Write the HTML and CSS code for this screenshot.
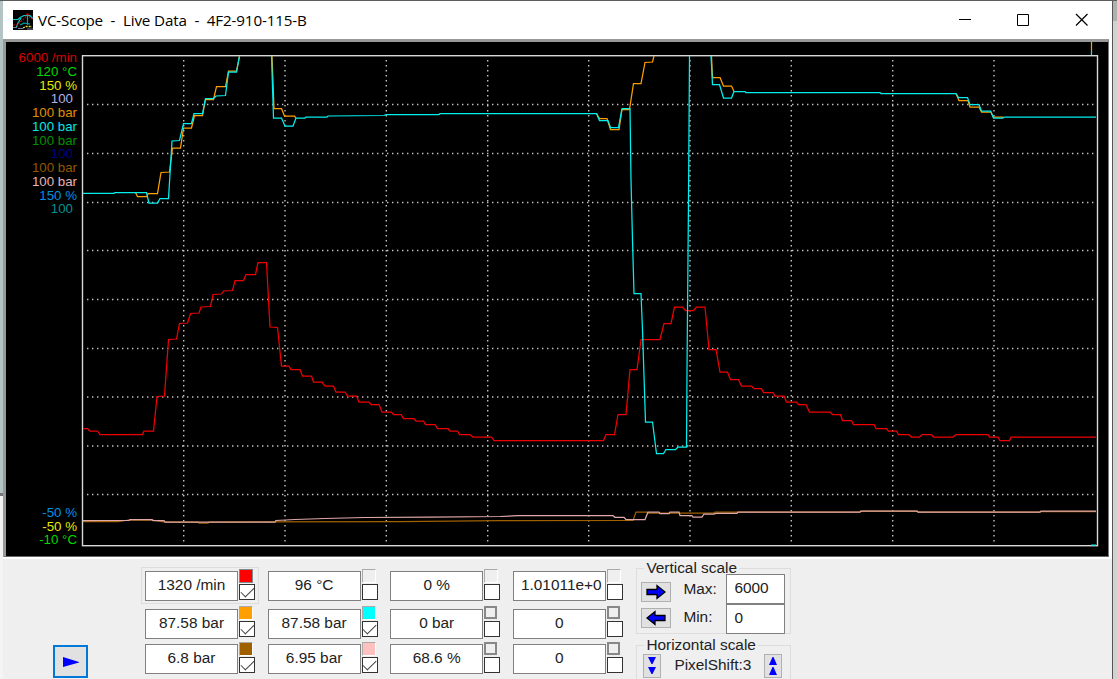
FILE: index.html
```html
<!DOCTYPE html>
<html lang="en">
<head>
    <meta charset="UTF-8">
    <meta name="viewport" content="width=device-width, initial-scale=1.0">
    <title>VC-Scope</title>
    <link rel="stylesheet" href="styles.css">
</head>
<body>
    <div class="desktop-left"></div>

    <div class="window">
        <header>
            <svg class="app-icon" width="20" height="20" viewBox="0 0 20 20">
                <rect width="20" height="20" fill="#000"/>
                <path d="M0 9.500h5l2-2 4-2h6l3 3M3 18l2-5 3-5" fill="none" stroke="#0cc" stroke-width="1.200"/>
                <path d="M0 15h5l2-3 5-4 2.500-5 2.500 5 3 1" fill="none" stroke="#d00000" stroke-width="1.100" stroke-dasharray="2 1"/>
                <path d="M14.500 6v9M7 15l4-2 6 1" fill="none" stroke="#0aa" stroke-width="1.200"/>
                <path d="M10 18l3-1.500h6" fill="none" stroke="#dd4" stroke-width="1.300" stroke-dasharray="2 1"/>
                <path d="M0 17.500h4M5 18.500h5M14 19h6" stroke="#779" stroke-width="1.200"/>
            </svg>
            <h1>VC-Scope&nbsp; -&nbsp; Live Data&nbsp; -&nbsp; 4F2-910-115-B</h1>
            <nav>
                <svg width="58" height="38" viewBox="0 0 58 38"><path d="M23 18.5h12" stroke="#000"/></svg>
                <svg width="58" height="38" viewBox="0 0 58 38"><path d="M23.5 13.5h11v11h-11z" fill="none" stroke="#000"/></svg>
                <svg width="58" height="38" viewBox="0 0 58 38"><path d="M24 13l11.500 11.500M35.500 13L24 24.500" stroke="#000" stroke-width="1.200"/></svg>
            </nav>
        </header>

        <main>
            <div class="scale">
                <ul class="scale-max">
                    <li class="red">6000 /min</li>
                    <li class="green">120 °C</li>
                    <li class="yellow">150 %</li>
                    <li class="lavender no-unit">100</li>
                    <li class="orange">100 bar</li>
                    <li class="cyan">100 bar</li>
                    <li class="dark-green">100 bar</li>
                    <li class="navy no-unit">100</li>
                    <li class="brown">100 bar</li>
                    <li class="pink">100 bar</li>
                    <li class="blue">150 %</li>
                    <li class="teal no-unit">100</li>
                </ul>
                <ul class="scale-min">
                    <li class="blue">-50 %</li>
                    <li class="yellow">-50 %</li>
                    <li class="green">-10 °C</li>
                </ul>
            </div>
            <svg class="plot" width="1030" height="514" viewBox="78 42 1030 514">
                <!-- grid -->
                <g class="grid">
                    <path d="M87 104.500H1094M87 153.500H1094M87 202.500H1094M87 250.500H1094M87 299.500H1094M87 348.500H1094M87 397H1094M87 446H1094M87 494.500H1094"/>
                    <path d="M183.700 60V543M285 60V543M386.300 60V543M487.700 60V543M588.700 60V543M690 60V543M791.300 60V543M892.700 60V543M994 60V543"/>
                </g>
                <rect class="frame" x="82.500" y="55.700" width="1015" height="490"/>
                <!-- channels -->
                <polyline class="trace brown" points="83,521.5 118,521.7 129,520 152,520 165,522 198,522 199,523 208,523 209,522 400,521.5 500,520.7 633,520.5 636,512 647,512 648,513 714,513 715,512 860,512 861,511 917,511 918,512 1040,512 1041,511.500 1096,511.500"/>
                <polyline class="trace pink" points="83,520.7 129,520.5 130,519.5 152,519.5 153,520.5 164,520.5 165,522 275,522 276,520.5 295,519.500 325,518.500 365,517.500 430,517 500,516.500 518,515.7 613,515.7 615,517.3 624,517.3 626,519.5 645,519.5 648,512 659,512 660,513.5 669,513.5 670,512 679,512 680,515.5 692,515.5 693,517 702,517 704,514 714,514 716,513.3 737,513.3 738,512 860,512 861,511 917,511 918,512 1040,512 1041,511 1096,511"/>
                <polyline class="trace red" points="83,428.5 87.5,428.5 90,431 97.5,431 100,434.5 142.5,434.5 144,431 153.5,431 157,396.5 164.5,396 168.5,339.5 176.5,339 179.5,323.5 187.5,323 190.5,313.5 199,313 201,307 210.5,306.5 213,294.5 221.5,294 223.5,291 232.5,290.5 235,280.5 243.5,280.5 246,274.5 255.5,274.5 258,262.5 266.5,262.5 270,327 277.5,327.5 281.5,366 289,366 291,369.5 300,369.5 302.5,376 311.5,376 313.5,382 322,382 325,386 333.5,386 336,392 345,392 347.5,396 356.5,396 359,402 369,402 371,404.5 379,404.5 382,412 391.5,412 393.5,414.5 401,414.5 403.5,418.5 414,418.5 416,421 423.5,421 425.5,424.5 435,424.5 437.5,428.5 448,428.5 450,431 457.5,431 459.5,434.5 470,434.5 473,437 491.5,437 494,440.5 603.5,440.5 606,434.5 614.5,434.5 618,414.5 626,414.5 630,369.5 637,369.5 641,339.5 660,339.5 664,323.5 671,323.5 674.5,307 682.5,307 685.5,310.5 693.5,310.5 696.5,307 705,307 709,349.5 716,349.5 720,372 727.5,372 730.5,379.5 738.5,379.5 741.5,386 751.5,386 754,388.5 761.5,388.5 763.5,392.5 773,392.5 775,396 784,396 786.5,402 796.5,402 798.5,404.5 806,404.5 809.5,412 830,412 832.5,414.5 840.5,414.5 842.5,420.5 851.5,420.5 853.5,424.5 874,424.5 876,428.5 886.5,428.5 888.5,431 896.5,431 898.5,434.5 909,434.5 911.5,437 919.5,437 922,434.5 931.5,434.5 933.5,437 953,437 956,434.5 988,434.5 989.5,437 998,437 1000,440.5 1009.5,440.5 1011,437 1096,437"/>
                <polyline class="trace orange" points="135.5,192.5 137.5,196.5 147,196.5 148,193.5 157.5,193.5 161,172.5 169.5,172 172.5,148 180.5,148 183.5,128 191.5,128 194.5,115.5 202.5,115.5 205.5,99.5 213.5,99.5 216.5,86.5 225.5,86.5 228.5,71 236.500,71 239.5,56"/>
                <polyline class="trace orange" points="272,56 274,108.5 281.5,108.5 284.5,116 294.5,116 296,118"/>
                <polyline class="trace orange" points="596.5,113.5 599.5,118.5 607,118.5 610.5,129.5 619,129.5 622,109.5 629.5,109.5 633.5,83.5 641,83.5 645,62.5 652.5,62 654,56"/>
                <polyline class="trace orange" points="711.500,56 712.5,77.5 720,77.5 723.5,86 731.5,86 734,91.5"/>
                <polyline class="trace orange" points="956,93.5 959,100.5 968,100.5 970,107 979,107 981.5,112 991,112 993.5,117 1003,117"/>
                <polyline class="trace cyan" points="83,193.3 114,193.3 115,192.5 146.5,192.5 149,203 157.5,203 160,198.5 168.5,198.5 172,141 179.5,140.5 183.5,123.5 191.5,123.5 194,113.5 202.5,113.5 205.5,98.5 213.5,98.5 216,96 225.5,95.5 228.5,72 236.5,72 239.5,56"/>
                <polyline class="trace cyan" points="271.5,56 273.5,118 281.5,118 285,126 293,126 296,118 305,118 306,117 327,117 328,116 384,115.500 386,114.500 439,114.500 440,113.5 596.5,113.5 599.5,120.5 608,120.5 610.5,127.5 618.5,127.5 622,108.5 630,108.5 631,180 632.5,240 634,293.5 641,293.5 642.5,330 645.5,422 652.5,422 656.5,453.5 663.5,453.5 666,449.5 675.5,449.5 678,447 686.5,447 687,370 688.5,200 689.5,56"/>
                <polyline class="trace cyan" points="711,56 712.5,84.5 719.5,84.5 723.5,98 731.5,98 734,91.5 745,91.5 746,92.5 880,92.5 881,93.5 956,93.5 958.5,97.5 967.5,97.5 970,104.5 979,104.5 981.5,111 990.5,111 993.5,118 1003,118 1004,117 1096,117"/>
                <path class="trace orange" d="M1091.500 42v9"/>
                <path class="trace cyan" d="M1091.500 51v4M1091 545h5"/>
            </svg>
        </main>

        <footer>
            <button class="play"><svg width="18" height="12" viewBox="0 0 18 12"><path d="M1 1v10l16-4.500V6z" fill="#00f"/></svg></button>

            <section class="channels">
                <div class="channel selected">
                    <span class="value">1320 /min</span>
                    <span class="marks"><i class="swatch fill-red"></i><i class="check on"></i></span>
                </div>
                <div class="channel">
                    <span class="value">96 °C</span>
                    <span class="marks"><i class="swatch"></i><i class="check"></i></span>
                </div>
                <div class="channel">
                    <span class="value">0 %</span>
                    <span class="marks"><i class="swatch"></i><i class="check"></i></span>
                </div>
                <div class="channel">
                    <span class="value">1.01011e+0</span>
                    <span class="marks"><i class="swatch"></i><i class="check"></i></span>
                </div>
                <div class="channel">
                    <span class="value">87.58 bar</span>
                    <span class="marks"><i class="swatch fill-orange"></i><i class="check on"></i></span>
                </div>
                <div class="channel">
                    <span class="value">87.58 bar</span>
                    <span class="marks"><i class="swatch fill-cyan"></i><i class="check on"></i></span>
                </div>
                <div class="channel">
                    <span class="value">0 bar</span>
                    <span class="marks"><i class="swatch boxed"></i><i class="check"></i></span>
                </div>
                <div class="channel">
                    <span class="value">0</span>
                    <span class="marks"><i class="swatch boxed"></i><i class="check"></i></span>
                </div>
                <div class="channel">
                    <span class="value">6.8 bar</span>
                    <span class="marks"><i class="swatch fill-brown"></i><i class="check on"></i></span>
                </div>
                <div class="channel">
                    <span class="value">6.95 bar</span>
                    <span class="marks"><i class="swatch fill-pink"></i><i class="check on"></i></span>
                </div>
                <div class="channel">
                    <span class="value">68.6 %</span>
                    <span class="marks"><i class="swatch boxed"></i><i class="check"></i></span>
                </div>
                <div class="channel">
                    <span class="value">0</span>
                    <span class="marks"><i class="swatch boxed"></i><i class="check"></i></span>
                </div>
            </section>

            <section class="scales">
                <fieldset class="vertical">
                    <legend>Vertical scale</legend>
                    <div class="arrows">
                        <button><svg width="20" height="16" viewBox="0 0 20 16"><path d="M1 5.500h10V1.500L19 8l-8 6.500v-4H1z" fill="#00f" stroke="#000" stroke-width="1.300"/></svg></button>
                        <button><svg width="20" height="16" viewBox="0 0 20 16"><path d="M19 5.500H9V1.500L1 8l8 6.500v-4h10z" fill="#00f" stroke="#000" stroke-width="1.300"/></svg></button>
                    </div>
                    <div class="names">
                        <label>Max:</label>
                        <label>Min:</label>
                    </div>
                    <div class="limits">
                        <span class="value">6000</span>
                        <span class="value">0</span>
                    </div>
                </fieldset>
                <fieldset class="horizontal">
                    <legend>Horizontal scale</legend>
                    <button><svg width="8" height="20" viewBox="0 0 8 20"><path d="M0 1h8L4.500 8h-1zM0 11h8l-3.500 7h-1z" fill="#00f"/></svg></button>
                    <label>PixelShift:3</label>
                    <button><svg width="8" height="20" viewBox="0 0 8 20"><path d="M0 9h8L4.500 1h-1zM0 19h8l-3.500-8h-1z" fill="#00f"/></svg></button>
                </fieldset>
            </section>
        </footer>
    </div>

    <div class="desktop-right"></div>
</body>
</html>
```
FILE: styles.css
```css
:root {
    --bg-panel: #efefef;
    --red: #ff0000;
    --orange: #ffa000;
    --cyan: #00ffff;
    --brown: #a06000;
    --pink: #ffc0c0;
}

* {
    box-sizing: border-box;
}

body {
    margin: 0;
    padding-top: 1px;
    height: 679px;
    display: flex;
    overflow: hidden;
    background: #5c5c5c;
    font-family: "Liberation Sans", Arial, sans-serif;
    color: #222;
}

.desktop-left {
    width: 3px;
    background: linear-gradient(#b4c4c4 0 492px, #777 492px 495px, #f4f4f4 495px);
}

.desktop-right {
    flex: 1;
    background: linear-gradient(#b0b0b0 0 20px, #d2d2d2 20px);
}

.window {
    width: 1110px;
    display: flex;
    flex-direction: column;
    border-right: 1px solid #555;
    background: #fff;
}

header {
    height: 38px;
    display: flex;
    align-items: center;
    padding-left: 10px;
    background: #fff;
}

header h1 {
    margin: -1px auto 0 5px;
    font: 400 15.2px "Open Sans", "Noto Sans", sans-serif;
    letter-spacing: -0.14px;
    color: #000;
    white-space: nowrap;
}

header nav {
    display: flex;
    margin-right: 2px;
}

/* scope */
main {
    display: flex;
    width: 1106px;
    height: 518px;
    border: solid;
    border-width: 3px 1px 1px 3px;
    border-color: #999 #777 #666 #999;
    background: #000;
}

.scale {
    width: 72px;
    display: flex;
    flex-direction: column;
    justify-content: space-between;
    padding: 9px 1px 9px 0;
    font-size: 13.3px;
    line-height: 13.75px;
    text-align: right;
    white-space: nowrap;
}

.scale ul {
    margin: 0;
    padding: 0;
    list-style: none;
}

.scale .no-unit {
    padding-right: 4px;
}

.scale .red { color: #d80000; }
.scale .green { color: #00d800; }
.scale .yellow { color: #e8e800; }
.scale .lavender { color: #b0b0e8; }
.scale .orange { color: #e09000; }
.scale .cyan { color: #00e8e8; }
.scale .dark-green { color: #009000; }
.scale .navy { color: #000080; }
.scale .brown { color: #905800; }
.scale .pink { color: #e8b4b4; }
.scale .blue { color: #0090e0; }
.scale .teal { color: #009090; }

.plot {
    display: block;
}

.grid path {
    fill: none;
    stroke: #c4c4c4;
    stroke-width: 1.4;
    stroke-dasharray: 1.4 3.6;
}

.frame {
    fill: none;
    stroke: #d8d8d8;
    stroke-width: 1.4;
}

.trace {
    fill: none;
    stroke-width: 1.25;
}

.trace.red { stroke: #f00000; }
.trace.orange { stroke: var(--orange); }
.trace.cyan { stroke: #00f0f0; }
.trace.brown { stroke: var(--brown); }
.trace.pink { stroke: #e0a8a8; }

/* controls */
footer {
    flex: 1;
    display: flex;
    align-items: flex-start;
    margin-top: 2px;
    background: var(--bg-panel);
    font-size: 15.4px;
}

footer button {
    display: flex;
    align-items: center;
    justify-content: center;
    padding: 0;
    border: 1px solid #b0b0b0;
    background: #e1e1e1;
}

footer .play {
    width: 35px;
    height: 33px;
    margin: 86px 0 0 50px;
    border: 2px solid #0078d7;
}

.channels {
    display: grid;
    grid-template-columns: repeat(4, 122.6px);
    grid-template-rows: 37px 36px 36px;
    margin: 8px 0 0 53px;
}

.channel {
    display: flex;
    align-items: flex-start;
    padding: 4px 0 0 4px;
}

.selected {
    width: 118px;
    height: 37px;
    border: 1px solid #ddd;
    padding: 3px 0 0 3px;
}

.value {
    height: 30px;
    border: 1px solid #808080;
    background: #fff;
    line-height: 26px;
}

.channel .value {
    width: 93px;
    text-align: center;
    white-space: nowrap;
}

.channel:nth-child(4) .value {
    padding-left: 4px;
}

.channel:nth-child(n+5) .value {
    margin-top: 1px;
}

.channel:nth-child(n+9) .value {
    margin-top: 0;
}

.marks {
    display: flex;
    flex-direction: column;
    gap: 1px;
    margin: -2px 0 0 1px;
}

.swatch {
    width: 14px;
    height: 14px;
    border: 1px solid;
    border-color: #aaa #fff #fff #aaa;
}

.swatch.boxed {
    border: 2px solid #888;
    width: 13px;
    height: 13px;
    margin-bottom: 1px;
}

.fill-red { background: var(--red); border-color: #888; }
.fill-orange { background: var(--orange); }
.fill-cyan { background: var(--cyan); }
.fill-brown { background: var(--brown); }
.fill-pink { background: var(--pink); }

.check {
    display: flex;
    justify-content: center;
    width: 16px;
    height: 16px;
    border: 1px solid #333;
    background: #fff;
}

.check.on::before {
    content: "";
    width: 6px;
    height: 12px;
    border: solid #444;
    border-width: 0 1.5px 1.5px 0;
    transform: translateY(-1px) rotate(45deg);
}

.scales {
    margin: 0 0 0 5px;
    width: 155px;
}

fieldset {
    display: flex;
    align-items: flex-start;
    min-width: 0;
    margin: 0;
    padding: 0;
    border: 1px solid #ddd;
}

legend {
    padding: 0 2px;
    line-height: 18px;
}

.vertical {
    height: 75px;
    padding-left: 4px;
}

.vertical legend {
    margin-left: 3px;
}

.arrows {
    display: flex;
    flex-direction: column;
    gap: 6px;
    width: 42px;
    padding-top: 5px;
}

.arrows button {
    width: 30px;
    height: 20px;
}

.names {
    display: flex;
    flex-direction: column;
    gap: 10px;
    width: 43px;
    padding-top: 3px;
    line-height: 18px;
}

.limits {
    display: flex;
    flex-direction: column;
    width: 59px;
    margin-top: -3px;
}

.limits .value {
    padding-left: 7px;
}

.horizontal {
    justify-content: space-between;
    height: 60px;
    margin-top: 2px;
    padding: 0 8px 0 6px;
}

.horizontal legend {
    margin-left: 1px;
}

.horizontal button {
    width: 18px;
    height: 24px;
}

.horizontal label {
    line-height: 22px;
}
```
